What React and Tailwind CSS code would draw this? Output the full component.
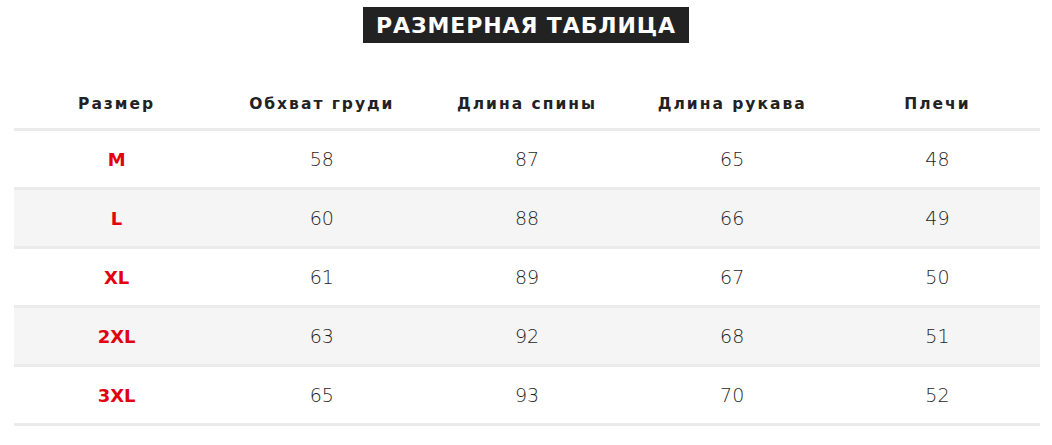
import React from 'react'

const HEADERS = ['Размер', 'Обхват груди', 'Длина спины', 'Длина рукава', 'Плечи']

const ROWS = [
  ['M', '58', '87', '65', '48'],
  ['L', '60', '88', '66', '49'],
  ['XL', '61', '89', '67', '50'],
  ['2XL', '63', '92', '68', '51'],
  ['3XL', '65', '93', '70', '52'],
]

export default function App() {
  return (
    <div className="w-[1052px] h-[445px] bg-white font-['DejaVu_Sans',sans-serif]">
      {/* Title */}
      <div className="flex justify-center pt-[7px]">
        <h1 className="h-[36px] w-[326px] bg-[#222222] text-white text-[22px] font-bold flex items-center justify-center tracking-[0.9px]">
          РАЗМЕРНАЯ ТАБЛИЦА
        </h1>
      </div>

      {/* Table */}
      <div className="mx-[14px] mt-[38px] w-[1026px]">
        <div className="grid grid-cols-5 h-[50px] items-center border-b-[3px] border-[#ebebeb]">
          {HEADERS.map((h) => (
            <div key={h} className="text-center text-[15.5px] font-bold tracking-[2px] text-[#222222]">
              {h}
            </div>
          ))}
        </div>
        {ROWS.map((row, i) => (
          <div
            key={row[0]}
            className={`grid grid-cols-5 h-[59px] items-center border-b-[3px] border-[#ebebeb] ${i % 2 === 1 ? 'bg-[#f5f5f5]' : 'bg-white'}`}
          >
            {row.map((cell, j) => (
              <div
                key={j}
                className={
                  j === 0
                    ? 'text-center text-[18px] font-bold text-[#e3000f]'
                    : 'text-center text-[19px] font-light text-[#1f1f1f]'
                }
              >
                {cell}
              </div>
            ))}
          </div>
        ))}
      </div>
    </div>
  )
}
